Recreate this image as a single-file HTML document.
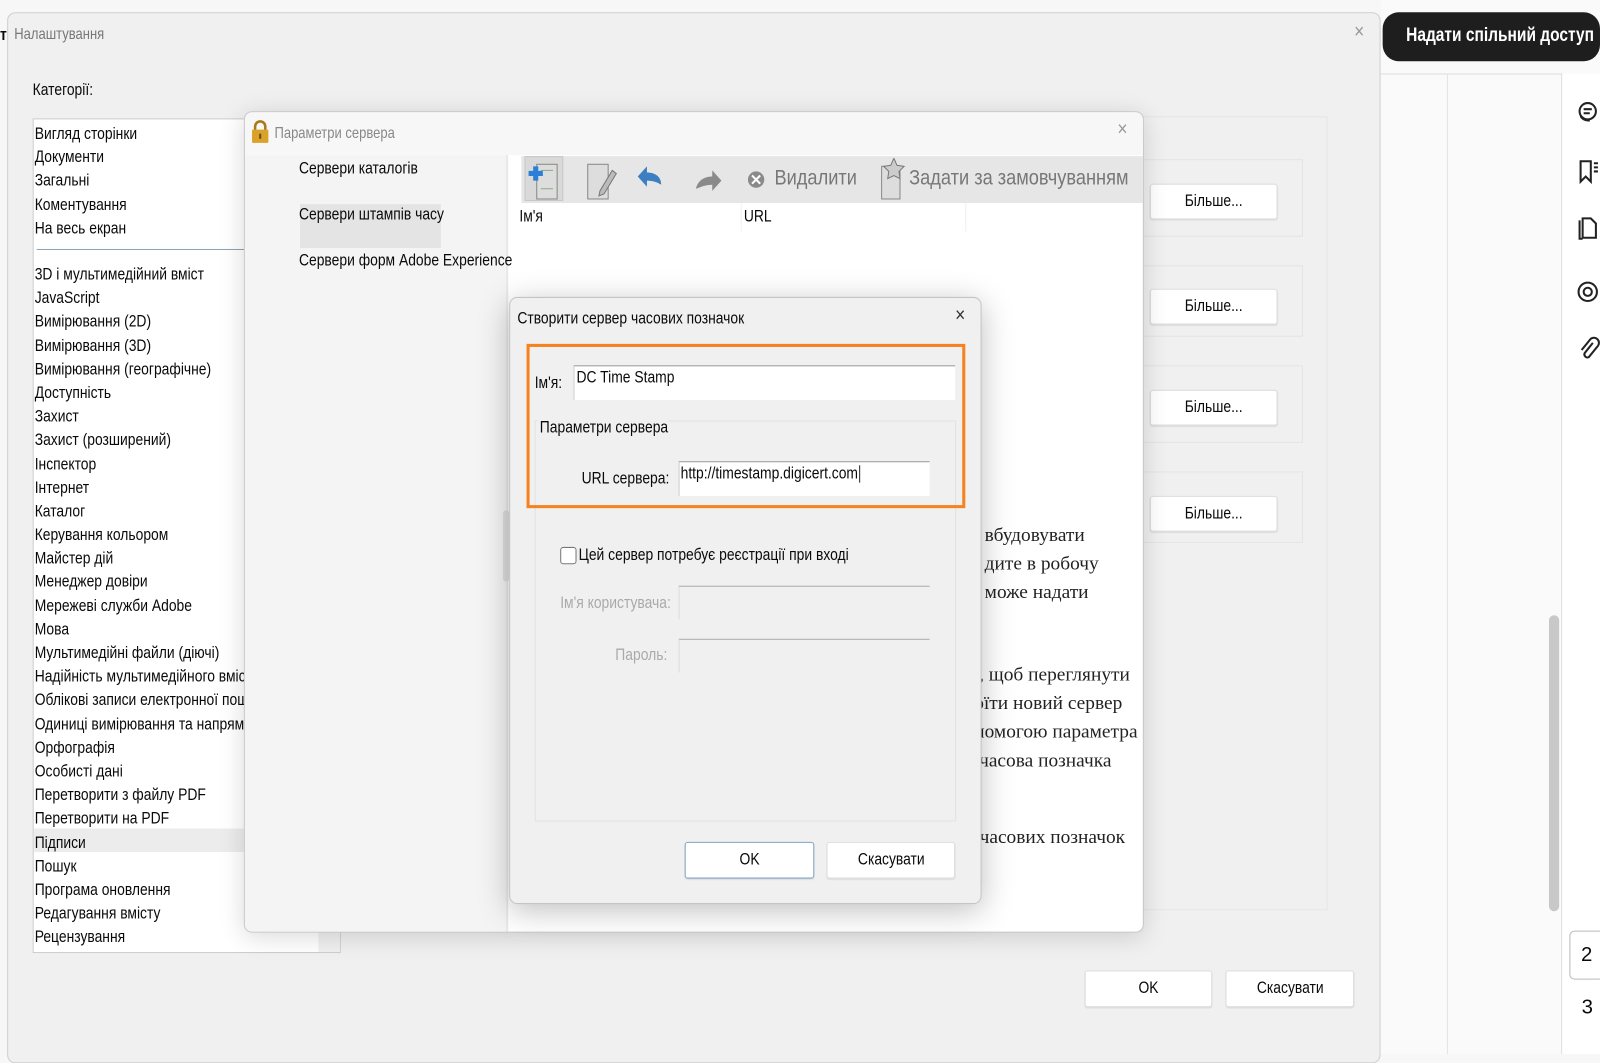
<!DOCTYPE html>
<html><head><meta charset="utf-8">
<style>
*{box-sizing:border-box;margin:0;padding:0}
body{width:1600px;height:1033px;overflow:hidden;background:#f7f7f7;position:relative;font-family:"Liberation Sans",sans-serif;font-size:16px;color:#0a0a0a}
#w{position:absolute;left:0;top:0;width:1568px;height:1013px;transform:scale(1.0204);transform-origin:0 0}
.abs{position:absolute}
.t{position:absolute;white-space:nowrap;line-height:18px;transform:scaleX(.85);transform-origin:0 0}
.btn{position:absolute;background:#fff;border:1px solid #ddd;border-radius:3px;text-align:center;font-size:16px;box-shadow:0 1px 1px rgba(0,0,0,.08);white-space:nowrap}
.btn span{display:inline-block;transform:scaleX(.85)}
.serif{font-family:"Liberation Serif",serif;font-size:19px;color:#222;transform:none}
</style></head><body><div id="w">
<div class="abs" style="left:1353px;top:0;width:247px;height:1033px;background:#fafafa"></div>
<div class="abs" style="left:1353px;top:72px;width:247px;height:1px;background:#ddd"></div>
<div class="abs" style="left:1418px;top:72px;width:1px;height:961px;background:#e4e4e4"></div>
<div class="abs" style="left:1530px;top:72px;width:1px;height:961px;background:#ddd"></div>
<div class="abs" style="left:1531px;top:72px;width:69px;height:961px;background:#fff"></div>
<div class="abs" style="left:1518px;top:603px;width:10px;height:290px;background:#c8c8c8;border-radius:5px"></div>
<div class="abs" style="left:1355px;top:12px;width:213px;height:48px;background:#1e1e1e;border-radius:16px;color:#fff;font-weight:bold;font-size:19px;line-height:46px;text-align:center;white-space:nowrap"><span style="display:inline-block;transform:scaleX(.8)">Надати спільний доступ</span></div>
<svg class="abs" style="left:1543px;top:96px" width="26" height="270" viewBox="0 0 26 270" fill="none" stroke="#222" stroke-width="2">
<circle cx="13" cy="13" r="8"/><path d="M9 11h8M9 15h6M6 18a9 9 0 0 0 9 4"/>
<path d="M6 62v20l5-5 5 5V62zM19 64h4M19 68h4M19 72h4"/>
<path d="M8 122v-4h8l5 5v14H8zM5 120v18h3"/>
<circle cx="13" cy="190" r="9"/><circle cx="13" cy="190" r="4"/>
<path d="M18 240l-8 10a3 3 0 0 0 4 4l9-11a5 5 0 0 0-7-7l-9 11"/>
</svg>
<div class="abs" style="left:1538px;top:912px;width:34px;height:48px;border:1px solid #bbb;border-radius:5px;background:#fff;font-size:20px;text-align:center;line-height:46px">2</div>
<div class="abs" style="left:1550px;top:976px;font-size:20px">3</div>

<div class="abs" style="left:7px;top:12px;width:1346px;height:1030px;background:#f0f0f0;border:1px solid #cfcfcf;border-radius:8px"></div>
<div class="t" style="left:0;top:26px;font-weight:bold">т</div>
<div class="t" style="left:14px;top:25px;color:#777;font-size:15px">Налаштування</div>
<div class="t" style="left:1327px;top:22px;color:#999;font-size:20px">×</div>
<div class="t" style="left:32px;top:80px">Категорії:</div>
<div class="abs" style="left:32px;top:116px;width:302px;height:818px;background:#fff;border:1px solid #ccc"></div>
<div class="abs" style="left:312px;top:815px;width:21px;height:118px;background:#f0f0f0"></div>
<div class="abs" style="left:36px;top:244px;width:204px;height:1px;background:#8aa4b8"></div>
<div class="abs" style="left:33px;top:812px;width:206px;height:23px;background:#ececec"></div>
<div class="t" style="left:34px;top:120px;line-height:23.2px">Вигляд сторінки<br>Документи<br>Загальні<br>Коментування<br>На весь екран</div>
<div class="t" style="left:34px;top:258px;line-height:23.18px">3D і мультимедійний вміст<br>JavaScript<br>Вимірювання (2D)<br>Вимірювання (3D)<br>Вимірювання (географічне)<br>Доступність<br>Захист<br>Захист (розширений)<br>Інспектор<br>Інтернет<br>Каталог<br>Керування кольором<br>Майстер дій<br>Менеджер довіри<br>Мережеві служби Adobe<br>Мова<br>Мультимедійні файли (діючі)<br>Надійність мультимедійного вміс<br>Облікові записи електронної пошт<br>Одиниці вимірювання та напрямн<br>Орфографія<br>Особисті дані<br>Перетворити з файлу PDF<br>Перетворити на PDF<br>Підписи<br>Пошук<br>Програма оновлення<br>Редагування вмісту<br>Рецензування</div>

<div class="abs" style="left:1100px;top:114px;width:201px;height:778px;border:1px solid #e6e6e6"></div>
<div class="abs" style="left:1100px;top:156px;width:177px;height:76px;border:1px solid #e4e4e4"></div>
<div class="abs" style="left:1100px;top:260px;width:177px;height:70px;border:1px solid #e4e4e4"></div>
<div class="abs" style="left:1100px;top:358px;width:177px;height:76px;border:1px solid #e4e4e4"></div>
<div class="abs" style="left:1100px;top:462px;width:177px;height:70px;border:1px solid #e4e4e4"></div>
<div class="btn" style="left:1127px;top:180px;width:125px;height:35px;line-height:33px"><span>Більше...</span></div>
<div class="btn" style="left:1127px;top:283px;width:125px;height:35px;line-height:33px"><span>Більше...</span></div>
<div class="btn" style="left:1127px;top:382px;width:125px;height:35px;line-height:33px"><span>Більше...</span></div>
<div class="btn" style="left:1127px;top:486px;width:125px;height:35px;line-height:33px"><span>Більше...</span></div>
<div class="btn" style="left:1063px;top:951px;width:125px;height:36px;line-height:34px"><span>OK</span></div>
<div class="btn" style="left:1201px;top:951px;width:126px;height:36px;line-height:34px"><span>Скасувати</span></div>

<div class="abs" style="left:239px;top:109px;width:882px;height:805px;background:#fff;border:1px solid #c8c8c8;border-radius:8px;box-shadow:0 4px 24px rgba(0,0,0,.15);overflow:hidden">
 <div class="abs" style="left:0;top:0;width:882px;height:42px;background:#f7f7f7"></div>
 <div class="abs" style="left:0;top:42px;width:256px;height:763px;background:#f4f4f4"></div>
 <div class="abs" style="left:256px;top:42px;width:2px;height:763px;background:#e8e8e8"></div>
 <div class="abs" style="left:271px;top:43px;width:611px;height:46px;background:#e6e6e6"></div>
 <div class="abs" style="left:54px;top:90px;width:138px;height:43px;background:#e4e4e4"></div>
 <div class="abs" style="left:706px;top:89px;width:1px;height:28px;background:#eee"></div>
 <div class="abs" style="left:486px;top:89px;width:1px;height:28px;background:#f2f2f2"></div>
</div>
<svg class="abs" style="left:246px;top:117px" width="18" height="24" viewBox="0 0 18 24"><path d="M4 11V7a5 5 0 0 1 10 0v4" fill="none" stroke="#a87a18" stroke-width="2.5"/><rect x="1" y="10" width="16" height="13" rx="1" fill="#d9a32a"/><rect x="8" y="14" width="2" height="5" fill="#6b4a0c"/></svg>
<div class="t" style="left:269px;top:122px;color:#888;font-size:15px">Параметри сервера</div>
<div class="t" style="left:1095px;top:118px;color:#999;font-size:20px">×</div>
<div class="t" style="left:293px;top:157px">Сервери каталогів</div>
<div class="t" style="left:293px;top:202px">Сервери штампів часу</div>
<div class="t" style="left:293px;top:247px">Сервери форм Adobe Experience</div>
<div class="abs" style="left:514px;top:153px;width:38px;height:44px;background:#d9d9d9;border:1px solid #c8c8c8"></div>
<svg class="abs" style="left:516px;top:155px" width="600" height="42" viewBox="0 0 600 42">
 <rect x="10" y="6" width="20" height="34" fill="#ddd" stroke="#888"/><path d="M14 12h12M14 30h12" stroke="#8a8"/><path d="M9 8v14M2 15h14" stroke="#2b7fd6" stroke-width="5"/>
 <rect x="60" y="6" width="20" height="34" fill="#ddd" stroke="#888"/><path d="M72 32l12-20 4 3-12 20-5 2z" fill="#bbb" stroke="#777"/>
 <path d="M132 26c0-8-6-12-14-12v-6l-9 10 9 10v-6c6 0 11 2 14 4z" fill="#3c7fc2"/>
 <path d="M166 30c2-8 8-12 16-12v-6l9 10-9 10v-6c-6 0-11 2-16 4z" fill="#8a8a8a"/>
 <circle cx="225" cy="21" r="8" fill="#8a8a8a"/><path d="M221 17l8 8M229 17l-8 8" stroke="#fff" stroke-width="2"/>
 <rect x="348" y="8" width="18" height="32" fill="#ddd" stroke="#888"/><path d="M360 0l3 7 7 1-5 5 1 7-6-3-6 3 1-7-5-5 7-1z" fill="#ccc" stroke="#777"/>
</svg>
<div class="t" style="left:759px;top:163px;color:#777;font-size:21px;line-height:24px">Видалити</div>
<div class="t" style="left:891px;top:163px;color:#777;font-size:21px;line-height:24px">Задати за замовчуванням</div>
<div class="t" style="left:509px;top:204px">Ім'я</div>
<div class="t" style="left:729px;top:204px">URL</div>
<div class="abs" style="left:493px;top:500px;width:6px;height:70px;background:#ddd;border-radius:3px"></div>

<div class="t serif" style="left:965px;top:511px;line-height:28px">вбудовувати<br>дите в робочу<br>може надати</div>
<div class="t serif" style="left:950px;top:648px;line-height:28px"><i>и</i>, щоб переглянути<br>&nbsp;оїти новий сервер<br>&nbsp;помогою параметра<br>, часова позначка</div>
<div class="t serif" style="left:960px;top:812px">часових позначок</div>

<div class="abs" style="left:499px;top:291px;width:463px;height:595px;background:#f0f0f0;border:1px solid #c4c4c4;border-radius:8px;box-shadow:0 6px 30px rgba(0,0,0,.25)"></div>
<div class="t" style="left:507px;top:304px">Створити сервер часових позначок</div>
<div class="t" style="left:936px;top:300px;font-size:20px;color:#333">×</div>
<div class="abs" style="left:524px;top:412px;width:413px;height:393px;border:1px solid #e2e2e2"></div>
<div class="abs" style="left:516px;top:337px;width:430px;height:161px;border:3px solid #f5821f"></div>
<div class="t" style="left:524px;top:367px">Ім'я:</div>
<div class="abs" style="left:562px;top:358px;width:374px;height:34px;background:#fff;border-top:1px solid #999;border-left:1px solid #ccc"></div>
<div class="t" style="left:565px;top:362px">DC Time Stamp</div>
<div class="abs" style="left:527px;top:411px;width:128px;height:20px;background:#f0f0f0"></div>
<div class="t" style="left:529px;top:411px">Параметри сервера</div>
<div class="t" style="left:570px;top:461px">URL сервера:</div>
<div class="abs" style="left:665px;top:452px;width:246px;height:34px;background:#fff;border-top:1px solid #999;border-left:1px solid #ccc"></div>
<div class="t" style="left:667px;top:456px">http://timestamp.digicert.com<span style="border-left:1px solid #000;margin-left:1px"></span></div>
<div class="abs" style="left:549px;top:536px;width:16px;height:17px;border:1px solid #777;border-radius:3px;background:#fff"></div>
<div class="t" style="left:567px;top:536px">Цей сервер потребує реєстрації при вході</div>
<div class="t" style="left:549px;top:583px;color:#aaa">Ім'я користувача:</div>
<div class="abs" style="left:665px;top:574px;width:246px;height:33px;border-top:1px solid #aaa;border-left:1px solid #ddd;background:#f0f0f0"></div>
<div class="t" style="left:603px;top:634px;color:#aaa">Пароль:</div>
<div class="abs" style="left:665px;top:626px;width:246px;height:33px;border-top:1px solid #aaa;border-left:1px solid #ddd;background:#f0f0f0"></div>
<div class="btn" style="left:671px;top:825px;width:127px;height:36px;line-height:34px;border-color:#7fa4c4"><span>OK</span></div>
<div class="btn" style="left:810px;top:825px;width:126px;height:36px;line-height:34px"><span>Скасувати</span></div>
</div></body></html>
